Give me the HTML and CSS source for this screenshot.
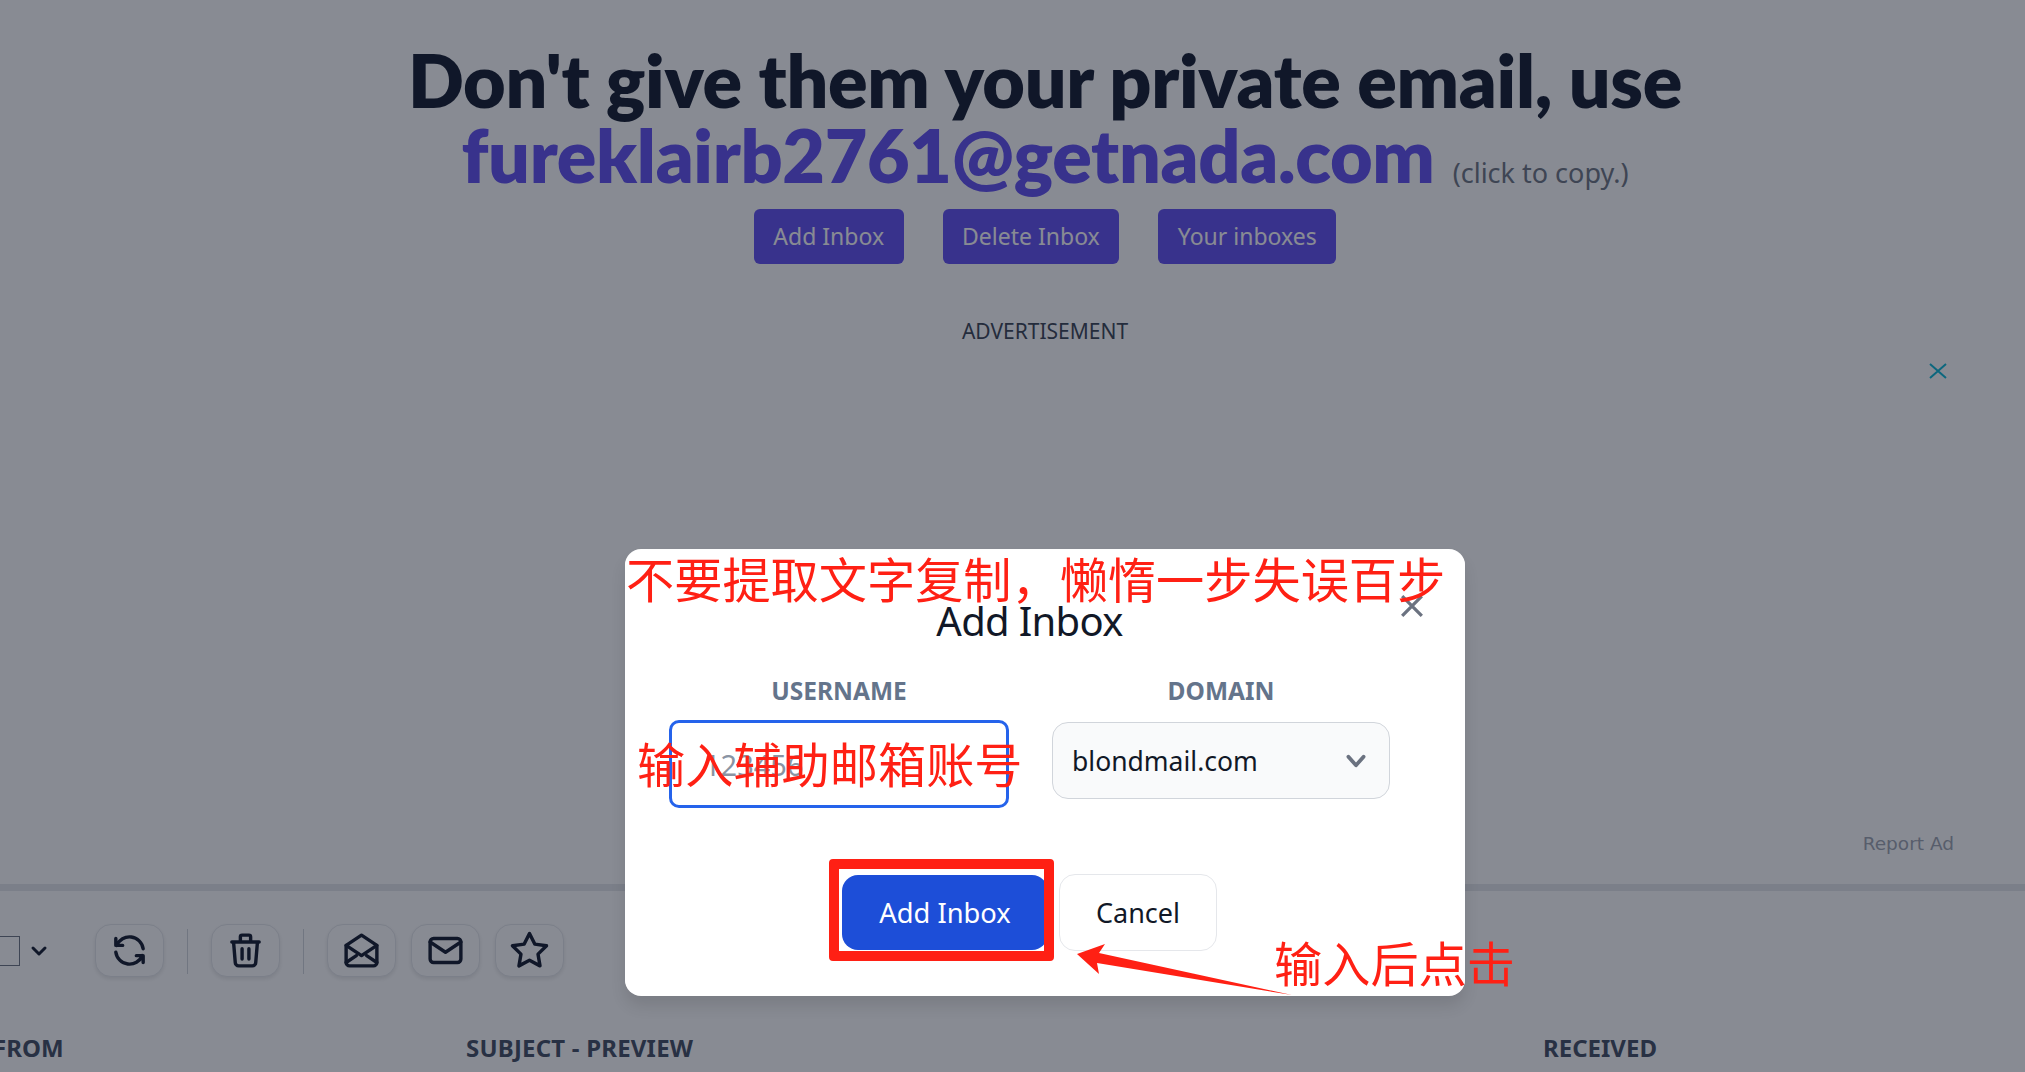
FILE: index.html
```html
<!DOCTYPE html>
<html lang="en">
<head>
<meta charset="utf-8">
<title>Add Inbox</title>
<link rel="stylesheet" href="styles.css">
</head>
<body>
<div class="page">
  <header class="hero">
    <h1 class="hero-title">Don't give them your private email, use<br><span class="hero-email">fureklairb2761@getnada.com</span><small class="hero-hint">(click to copy.)</small></h1>
    <div class="hero-actions">
      <button class="btn-indigo">Add Inbox</button>
      <button class="btn-indigo">Delete Inbox</button>
      <button class="btn-indigo">Your inboxes</button>
    </div>
  </header>
  <section class="ad">
    <div class="ad-label">ADVERTISEMENT</div>
    <div class="ad-close"><svg viewBox="0 0 18 18" class="ad-x"><path d="M1 2l16 14M17 2L1 16"/></svg></div>
    <div class="ad-report">Report Ad</div>
  </section>
  <section class="toolbar">
    <span class="check"></span>
    <svg class="ico ico-chev" viewBox="0 0 24 24"><path d="M6 9l6 6l6 -6"/></svg>
    <button class="tool"><svg class="ico" viewBox="0 0 24 24"><path d="M20 11a8.1 8.1 0 0 0 -15.5 -2m-.5 -4v4h4"/><path d="M4 13a8.1 8.1 0 0 0 15.5 2m.5 4v-4h-4"/></svg></button>
    <span class="sep"></span>
    <button class="tool"><svg class="ico" viewBox="0 0 24 24"><path d="M4 7h16M10 11v6M14 11v6M5 7l1 12a2 2 0 0 0 2 2h8a2 2 0 0 0 2 -2l1 -12M9 7v-3a1 1 0 0 1 1 -1h4a1 1 0 0 1 1 1v3"/></svg></button>
    <span class="sep"></span>
    <div class="tool-group">
      <button class="tool"><svg class="ico" viewBox="0 0 24 24"><path d="M3 9l9 6l9 -6l-9 -6l-9 6"/><path d="M21 9v10a2 2 0 0 1 -2 2h-14a2 2 0 0 1 -2 -2v-10"/><path d="M3 19l6 -4M15 15l6 4"/></svg></button>
      <button class="tool"><svg class="ico" viewBox="0 0 24 24"><rect x="3" y="5" width="18" height="14" rx="2"/><path d="M3 7l9 6l9 -6"/></svg></button>
      <button class="tool"><svg class="ico" viewBox="0 0 24 24"><path d="M12 17.75l-6.172 3.245l1.179 -6.873l-5 -4.867l6.9 -1l3.086 -6.253l3.086 6.253l6.9 1l-5 4.867l1.179 6.873z"/></svg></button>
    </div>
  </section>
  <div class="thead">
    <span class="th th-from">FROM</span>
    <span class="th th-subject">SUBJECT - PREVIEW</span>
    <span class="th">RECEIVED</span>
  </div>

  <div class="overlay">
    <div class="modal">
      <h2 class="modal-title">Add Inbox</h2>
      <div class="fields">
        <label class="field">
          <span class="field-label">USERNAME</span>
          <input class="input" placeholder="123456">
        </label>
        <div class="field">
          <span class="field-label">DOMAIN</span>
          <div class="select"><span>blondmail.com</span><svg class="sel-chev" viewBox="0 0 24 24"><path d="M5 8l7 8l7 -8"/></svg></div>
        </div>
      </div>
      <div class="modal-actions">
        <button class="btn-primary">Add Inbox</button>
        <button class="btn-cancel">Cancel</button>
      </div>
      <svg class="modal-close" viewBox="0 0 22 22"><path d="M2 2l18 18M20 2L2 20"/></svg>
    </div>
  </div>

  <div class="note note-top">不要提取文字复制，懒惰一步失误百步</div>
  <div class="note note-input">输入辅助邮箱账号</div>
  <div class="note note-click">输入后点击</div>
  <div class="note-box"></div>
  <svg class="note-arrow" viewBox="0 0 220 56"><polygon points="5,12 33,2 27,11 220,53 25,21 27,32"/></svg>
</div>
</body>
</html>
```
FILE: styles.css
```css
* { box-sizing: border-box; }
html, body { margin: 0; height: 100%; }
body { overflow: hidden; background: #fff; font-family: "Noto Sans", "Open Sans", sans-serif; color: #111827; }
button { font-family: inherit; cursor: pointer; }

.page { position: relative; width: 2110px; height: 1072px; margin-left: -10px; overflow: hidden; display: flex; flex-direction: column; }

.hero { padding-top: 42px; text-align: center; }
.hero-title { margin: 0; font-family: "Lato", "Noto Sans", sans-serif; font-size: 73.5px; line-height: 75px; font-weight: 800; letter-spacing: -.3px; color: #0f172a; }
.hero-email { color: #5f4cf1; }
.hero-hint { margin-left: 18px; font-family: "Noto Sans", sans-serif; font-size: 27px; line-height: 1; font-weight: 400; letter-spacing: 0; color: #6b7280; }
.hero-actions { margin-top: 17px; display: flex; justify-content: center; gap: 39px; }
.btn-indigo { height: 55px; padding: 0 19.5px 2px; border: 0; border-radius: 6px; background: #5f4cf1; color: #fff; font-size: 23px; }

.ad { height: 620px; display: flex; flex-direction: column; }
.ad-label { margin-top: 54px; text-align: center; font-size: 21px; line-height: 26px; color: #374151; }
.ad-close { margin-top: 18px; padding-right: 153px; display: flex; justify-content: flex-end; }
.ad-x { width: 18px; height: 18px; fill: none; stroke: #06b6d4; stroke-width: 2; }
.ad-report { margin-top: auto; margin-bottom: 29px; padding-right: 146px; text-align: right; font-family: "DejaVu Sans", sans-serif; font-size: 18.5px; line-height: 22px; color: #9ca3af; }

.toolbar { border-top: 7px solid #e5e7eb; padding-top: 33px; height: 118px; display: flex; align-items: flex-start; }
.check { width: 30px; height: 30px; margin-top: 12px; border: 1px solid #6b7280; background: #fff; }
.ico { width: 41px; height: 41px; fill: none; stroke: #0f172a; stroke-width: 2; stroke-linecap: round; stroke-linejoin: round; }
.ico-chev { width: 24px; height: 24px; margin: 15px 44px 0 7px; stroke-width: 3; }
.tool { width: 69px; height: 53px; padding: 0; border: 1px solid #e5e7eb; border-radius: 16px; background: #fff; box-shadow: 0 2px 4px rgba(0,0,0,.1); display: flex; align-items: center; justify-content: center; }
.sep { width: 1px; height: 45px; margin: 5px 23px 0 23px; background: #d1d5db; }
.tool-group { display: flex; gap: 15px; }

.thead { padding: 30px 0 0 3px; display: flex; }
.th { font-size: 24px; font-weight: 700; line-height: 32px; color: #3f4a60; }
.th-from { width: 473px; }
.th-subject { width: 1077px; letter-spacing: .2px; }

.overlay { position: absolute; inset: 0; background: rgba(17,24,39,.5); display: flex; justify-content: center; align-items: flex-start; padding-top: 550px; }
.modal { position: relative; width: 840px; height: 446px; padding: 43px 75px 0 44px; border-radius: 16px; background: #fff; box-shadow: 0 10px 15px rgba(0,0,0,.1), 0 -1px 0 #fff; }
.modal-title { margin: 0; text-align: center; font-size: 40px; line-height: 56px; font-weight: 400; letter-spacing: -.7px; color: #111827; }
.fields { margin-top: 26px; display: grid; grid-template-columns: 340px 338px; column-gap: 43px; }
.field { display: flex; flex-direction: column; align-items: stretch; }
.field-label { margin-bottom: 13px; text-align: center; font-size: 24.5px; line-height: 32px; font-weight: 700; color: #64748b; }
.input { height: 88px; width: 100%; padding: 0 32px; border: 3px solid #2563eb; border-radius: 10px; outline: 0; font: 400 29px "Noto Sans", sans-serif; }
.input::placeholder { color: #8a94a3; }
.select { height: 77px; margin-top: 2px; padding: 0 20px 0 19px; border: 1px solid #d1d5db; border-radius: 16px; background: #f9fafb; display: flex; align-items: center; justify-content: space-between; font-size: 26.5px; color: #111827; }
.sel-chev { width: 26px; height: 26px; fill: none; stroke: #6b7280; stroke-width: 3.5; stroke-linecap: round; stroke-linejoin: round; }
.modal-actions { margin-top: 66px; display: flex; justify-content: center; align-items: center; gap: 11px; }
.btn-primary { width: 206px; height: 75px; border: 0; border-radius: 16px; background: #1d4ed8; color: #fff; font-size: 27.3px; }
.btn-cancel { width: 158px; height: 77px; border: 1px solid #e5e7eb; border-radius: 16px; background: #fff; color: #111827; font-size: 27px; }
.modal-close { position: absolute; top: 44px; right: 41px; width: 24px; height: 24px; fill: none; stroke: #6b7280; stroke-width: 3; }

.note { position: absolute; white-space: nowrap; color: #ff2014; font-family: "Noto Sans CJK SC", sans-serif; font-size: 48.2px; line-height: 56px; }
.note-top { left: 636px; top: 549px; }
.note-input { left: 647px; top: 734px; }
.note-click { left: 1284px; top: 933px; }
.note-box { position: absolute; left: 839px; top: 859px; width: 225px; height: 102px; border: 10px solid #ff2014; border-radius: 4px; }
.note-arrow { position: absolute; left: 1082px; top: 942px; width: 220px; height: 56px; fill: #ff2014; }
```
